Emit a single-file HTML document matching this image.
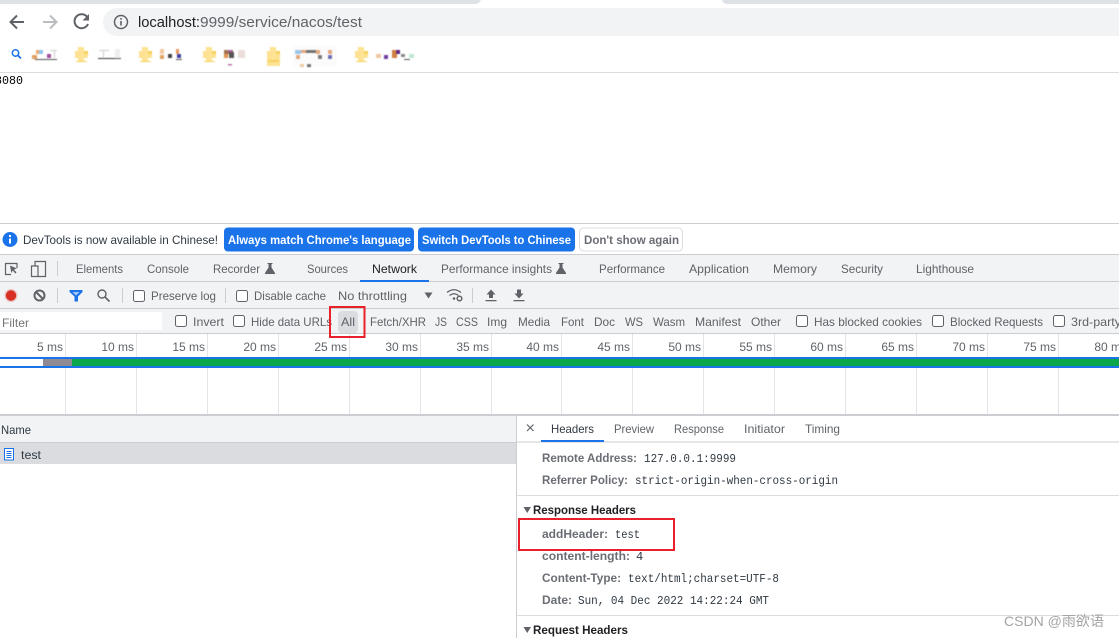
<!DOCTYPE html>
<html><head><meta charset="utf-8"><style>
html,body{margin:0;padding:0;background:#fff;width:1119px;height:638px;overflow:hidden}
svg{display:block;position:absolute;left:0;top:0}
text{font-family:"Liberation Sans","Noto Sans CJK SC",sans-serif;font-size:12px;fill:#5f6368;white-space:pre}
.d{fill:#303942}
.m{font-family:"Liberation Mono",monospace;fill:#303942;font-size:12px}
.b{font-weight:bold;fill:#6a6e74}
.h{font-weight:bold;fill:#202124}
.w{font-weight:bold;fill:#fff}
</style></head><body>
<svg width="1119" height="638" viewBox="0 0 1119 638" xmlns="http://www.w3.org/2000/svg">
<defs><filter id="bl" x="-5%" y="-20%" width="110%" height="140%"><feGaussianBlur stdDeviation="0.4"/></filter>
<path id="pz" d="M3 0h6v4h4v7H9v3h3v1H1v-1h2v-3H0V4h3z"/></defs>
<rect width="1119" height="638" fill="#fff"/>
<!-- tab strip -->
<path d="M0 0H481Q479 4 475 4H0z" fill="#dee1e6"/>
<path d="M722 0H1119V4H728Q723 4 722 0z" fill="#dee1e6"/>
<!-- nav -->
<g fill="none" stroke="#5f6368" stroke-width="2">
<path d="M24 22H11M17 15.500l-6.500 6.500 6.500 6.500"/>
<path d="M43 22H56M50 15.500l6.500 6.500-6.500 6.500" stroke="#babcbe"/>
<path d="M87.500 17.500A7 7 0 1 0 88 24"/></g>
<path d="M89 14v6.500h-6.500z" fill="#5f6368"/>
<rect x="103" y="8" width="1030" height="28" rx="14" fill="#f1f3f4"/>
<circle cx="121" cy="22" r="6.500" fill="none" stroke="#5f6368" stroke-width="1.500"/>
<rect x="120.200" y="21" width="1.600" height="4.500" fill="#5f6368"/><rect x="120.200" y="18" width="1.600" height="1.700" fill="#5f6368"/>
<text x="138" y="27" style="font-size:15px;fill:#202124" textLength="62" lengthAdjust="spacingAndGlyphs">localhost:</text>
<text x="200" y="27" style="font-size:15px" textLength="162" lengthAdjust="spacingAndGlyphs">9999/service/nacos/test</text>
<!-- bookmarks -->
<circle cx="15.500" cy="53" r="3.200" fill="none" stroke="#1a73e8" stroke-width="1.500"/><path d="M18 55.500l3 3" stroke="#1a73e8" stroke-width="1.700"/>
<g filter="url(#bl)">
<g fill="#fde293"><use href="#pz" x="75" y="47"/><use href="#pz" x="139" y="47"/><use href="#pz" x="203" y="47"/><use href="#pz" x="267" y="47"/><rect x="267" y="58" width="13" height="8"/><use href="#pz" x="355" y="47"/></g>
<g fill="#f5cf55"><rect x="84" y="51" width="4" height="3"/><rect x="148" y="51" width="4" height="3"/><rect x="212" y="51" width="4" height="3"/><rect x="276" y="51" width="4" height="3"/><rect x="364" y="51" width="4" height="3"/><rect x="268" y="60" width="11" height="2"/><rect x="76" y="61" width="11" height="1"/><rect x="140" y="61" width="11" height="1"/><rect x="204" y="61" width="11" height="1"/><rect x="356" y="61" width="11" height="1"/></g>
<rect x="32" y="55" width="5" height="4" fill="#e0a060"/><rect x="36" y="50" width="7" height="4" fill="#8fc4ee"/><rect x="36" y="50" width="3" height="4" fill="#eaa868"/><rect x="47" y="54" width="4" height="4" fill="#a050a0"/><rect x="35" y="59" width="22" height="1" fill="#555"/><rect x="50" y="50" width="7" height="1" fill="#ccc"/><rect x="54" y="50" width="1" height="8" fill="#ccc"/>
<rect x="98" y="58" width="23" height="1" fill="#333"/><rect x="99" y="50" width="10" height="1" fill="#ccc"/><rect x="103" y="50" width="1" height="8" fill="#ccc"/><rect x="115" y="49" width="5" height="9" fill="#eee"/>
<rect x="160" y="49" width="4" height="5" fill="#f0c8a0"/><rect x="160" y="55" width="4" height="4" fill="#e0a060"/><rect x="168" y="54" width="4" height="4" fill="#444"/><rect x="176" y="49" width="3" height="5" fill="#e89860"/><rect x="177" y="54" width="4" height="4" fill="#4040a0"/><rect x="176" y="59" width="6" height="1" fill="#555"/>
<rect x="224" y="50" width="9" height="4" fill="#a07050"/><rect x="224" y="54" width="4" height="4" fill="#e09050"/><rect x="229" y="52" width="5" height="6" fill="#555"/><rect x="228" y="50" width="4" height="2" fill="#b060a0"/><rect x="238" y="50" width="7" height="8" fill="#eadfd8"/><rect x="228" y="64" width="4" height="1.500" fill="#c070a0"/>
<rect x="295" y="50" width="6" height="4" fill="#80b8e8"/><rect x="301" y="50" width="5" height="3" fill="#e09050"/><rect x="306" y="50" width="10" height="3" fill="#444"/><rect x="296" y="55" width="4" height="4" fill="#e09050"/><rect x="316" y="50" width="4" height="4" fill="#e09050"/><rect x="318" y="55" width="4" height="4" fill="#555"/><rect x="328" y="50" width="4" height="4" fill="#e09050"/><rect x="328" y="55" width="4" height="4" fill="#4040a0"/><rect x="300" y="64" width="4" height="3" fill="#f0c090"/><rect x="307" y="64" width="4" height="3" fill="#555"/><rect x="293" y="46" width="44" height="20" fill="#eee" opacity=".25"/>
<rect x="376" y="54" width="5" height="4" fill="#f0c8a0"/><rect x="384" y="55" width="4" height="4" fill="#7040a0"/><rect x="392" y="50" width="5" height="8" fill="#d08040"/><rect x="396" y="50" width="4" height="4" fill="#602080"/><rect x="401" y="54" width="4" height="3" fill="#888"/><rect x="404" y="59" width="6" height="1" fill="#555"/><rect x="409" y="54" width="5" height="4" fill="#bfe8d4"/>
</g>
<rect x="0" y="72" width="1119" height="1" fill="#dadce0"/>
<text class="m" x="-5" y="84" style="fill:#000;font-size:12px" textLength="28" lengthAdjust="spacingAndGlyphs">8080</text>
<!-- devtools -->
<rect y="223" width="1119" height="1" fill="#cbcdd1"/>
<circle cx="10" cy="239.500" r="7.500" fill="#1a73e8"/><rect x="9" y="238.500" width="2" height="5" fill="#fff"/><rect x="9" y="235" width="2" height="2" fill="#fff"/>
<text class="d" x="23" y="244" textLength="195" lengthAdjust="spacingAndGlyphs">DevTools is now available in Chinese!</text>
<rect x="224" y="227.500" width="190" height="24" rx="4" fill="#1a73e8"/>
<text class="w" x="228" y="244" textLength="183" lengthAdjust="spacingAndGlyphs">Always match Chrome's language</text>
<rect x="418" y="227.500" width="157" height="24" rx="4" fill="#1a73e8"/>
<text class="w" x="422" y="244" textLength="149" lengthAdjust="spacingAndGlyphs">Switch DevTools to Chinese</text>
<rect x="579.500" y="228" width="103" height="23" rx="4" fill="#fff" stroke="#dadce0"/>
<text x="584" y="244" textLength="95" lengthAdjust="spacingAndGlyphs" style="font-weight:bold;fill:#6a6e74">Don't show again</text>
<rect y="254" width="1119" height="1" fill="#cbcdd1"/>
<rect y="255" width="1119" height="78" fill="#f1f3f4"/>
<rect y="281" width="1119" height="1" fill="#cbcdd1"/>
<rect y="308" width="1119" height="1" fill="#cbcdd1"/>
<rect y="333" width="1119" height="1" fill="#cbcdd1"/>
<!-- tabs row -->
<g fill="none" stroke="#5f6368" stroke-width="1.200"><path d="M11 274.500H5.500V263.500H17V268"/><path d="M35 266V261.500H45.500V276.500H31.500V266H38V276.500"/></g>
<path d="M10 265.500l7 3-3 1 2.500 3-1.200 1-2.500-3-1.500 2.500z" fill="#5f6368"/>
<rect x="57" y="261" width="1" height="15" fill="#cbcdd1"/>
<text x="76" y="273" textLength="47" lengthAdjust="spacingAndGlyphs">Elements</text>
<text x="147" y="273" textLength="42" lengthAdjust="spacingAndGlyphs">Console</text>
<text x="213" y="273" textLength="47" lengthAdjust="spacingAndGlyphs">Recorder</text>
<path d="M267.500 263h5v1h-1v3.500l3.500 5.500v1h-10v-1l3.500-5.500V264h-1z" fill="#5f6368"/>
<text x="307" y="273" textLength="41" lengthAdjust="spacingAndGlyphs">Sources</text>
<text x="372" y="273" textLength="45" lengthAdjust="spacingAndGlyphs" style="fill:#202124">Network</text>
<rect x="360" y="280" width="69" height="2" fill="#1a73e8"/>
<text x="441" y="273" textLength="111" lengthAdjust="spacingAndGlyphs">Performance insights</text>
<path d="M558.500 263h5v1h-1v3.500l3.500 5.500v1h-10v-1l3.500-5.500V264h-1z" fill="#5f6368"/>
<text x="599" y="273" textLength="66" lengthAdjust="spacingAndGlyphs">Performance</text>
<text x="689" y="273" textLength="60" lengthAdjust="spacingAndGlyphs">Application</text>
<text x="773" y="273" textLength="44" lengthAdjust="spacingAndGlyphs">Memory</text>
<text x="841" y="273" textLength="42" lengthAdjust="spacingAndGlyphs">Security</text>
<text x="916" y="273" textLength="58" lengthAdjust="spacingAndGlyphs">Lighthouse</text>
<!-- toolbar -->
<circle cx="11" cy="295.500" r="6.500" fill="#d93025" opacity=".25"/><circle cx="11" cy="295.500" r="5.200" fill="#d93025"/>
<circle cx="39.500" cy="295.500" r="5" fill="none" stroke="#5f6368" stroke-width="2"/><path d="M36 292l7 7" stroke="#5f6368" stroke-width="2"/>
<rect x="57" y="288" width="1" height="15" fill="#cbcdd1"/>
<path d="M69.500 290H82.500V292L78 296.500V301.500L74.500 301.500V296.500L69.500 292z" fill="#1a73e8"/><path d="M72.500 292H79.500L76 295.500z" fill="#a8c8f4"/>
<circle cx="102" cy="294" r="4" fill="none" stroke="#5f6368" stroke-width="1.400"/><path d="M105 297l4.500 4.500" stroke="#5f6368" stroke-width="1.600"/>
<rect x="122" y="288" width="1" height="15" fill="#cbcdd1"/>
<rect x="133.500" y="290.500" width="11" height="11" rx="2" fill="#fff" stroke="#5f6368"/>
<text x="151" y="300" textLength="65" lengthAdjust="spacingAndGlyphs">Preserve log</text>
<rect x="225" y="288" width="1" height="15" fill="#cbcdd1"/>
<rect x="236.500" y="290.500" width="11" height="11" rx="2" fill="#fff" stroke="#5f6368"/>
<text x="254" y="300" textLength="72" lengthAdjust="spacingAndGlyphs">Disable cache</text>
<text x="338" y="300" textLength="69" lengthAdjust="spacingAndGlyphs">No throttling</text>
<path d="M424.500 292.500h8l-4 6z" fill="#5f6368"/>
<g fill="none" stroke="#5f6368" stroke-width="1.300"><path d="M447 292.500q7-5.500 14 0"/><path d="M449.500 295.500q4.500-3.500 9 0"/></g>
<circle cx="454" cy="298.500" r="1.300" fill="#5f6368"/><circle cx="459.500" cy="298.500" r="2.300" fill="none" stroke="#5f6368" stroke-width="1.500"/>
<rect x="472" y="288" width="1" height="15" fill="#cbcdd1"/>
<path d="M491 289.500l4.500 5h-2.500v3.500h-4v-3.500h-2.500zM485.500 300h11v1.300h-11z" fill="#5f6368"/>
<path d="M517 289.500h4v4h2.500l-4.500 5-4.500-5h2.500zM513.500 300h11v1.300h-11z" fill="#5f6368"/>
<!-- filter row -->
<rect x="0" y="312" width="162" height="18" fill="#fff"/>
<text x="2" y="327" textLength="27" lengthAdjust="spacingAndGlyphs" style="fill:#757575">Filter</text>
<rect x="175.500" y="315.500" width="11" height="11" rx="2" fill="#fff" stroke="#5f6368"/>
<text x="193" y="326" textLength="31" lengthAdjust="spacingAndGlyphs">Invert</text>
<rect x="233.500" y="315.500" width="11" height="11" rx="2" fill="#fff" stroke="#5f6368"/>
<text x="251" y="326" textLength="81" lengthAdjust="spacingAndGlyphs">Hide data URLs</text>
<rect x="338" y="311" width="20" height="22" rx="4" fill="#dadce0"/>
<text x="341" y="326" textLength="14" lengthAdjust="spacingAndGlyphs">All</text>
<text x="370" y="326" textLength="56" lengthAdjust="spacingAndGlyphs">Fetch/XHR</text>
<text x="435" y="326" textLength="12" lengthAdjust="spacingAndGlyphs">JS</text>
<text x="456" y="326" textLength="22" lengthAdjust="spacingAndGlyphs">CSS</text>
<text x="487" y="326" textLength="20" lengthAdjust="spacingAndGlyphs">Img</text>
<text x="518" y="326" textLength="32" lengthAdjust="spacingAndGlyphs">Media</text>
<text x="561" y="326" textLength="23" lengthAdjust="spacingAndGlyphs">Font</text>
<text x="594" y="326" textLength="21" lengthAdjust="spacingAndGlyphs">Doc</text>
<text x="625" y="326" textLength="18" lengthAdjust="spacingAndGlyphs">WS</text>
<text x="653" y="326" textLength="32" lengthAdjust="spacingAndGlyphs">Wasm</text>
<text x="695" y="326" textLength="46" lengthAdjust="spacingAndGlyphs">Manifest</text>
<text x="751" y="326" textLength="30" lengthAdjust="spacingAndGlyphs">Other</text>
<rect x="796.500" y="315.500" width="11" height="11" rx="2" fill="#fff" stroke="#5f6368"/>
<text x="814" y="326" textLength="108" lengthAdjust="spacingAndGlyphs">Has blocked cookies</text>
<rect x="932.500" y="315.500" width="11" height="11" rx="2" fill="#fff" stroke="#5f6368"/>
<text x="950" y="326" textLength="93" lengthAdjust="spacingAndGlyphs">Blocked Requests</text>
<rect x="1053.500" y="315.500" width="11" height="11" rx="2" fill="#fff" stroke="#5f6368"/>
<text x="1071" y="326" textLength="50" lengthAdjust="spacingAndGlyphs">3rd-party</text>
<!-- timeline grid -->
<g fill="#e3e4e6">
<rect x="65" y="334" width="1" height="80"/><rect x="136" y="334" width="1" height="80"/><rect x="207" y="334" width="1" height="80"/><rect x="278" y="334" width="1" height="80"/><rect x="349" y="334" width="1" height="80"/><rect x="420" y="334" width="1" height="80"/><rect x="491" y="334" width="1" height="80"/><rect x="561" y="334" width="1" height="80"/><rect x="632" y="334" width="1" height="80"/><rect x="703" y="334" width="1" height="80"/><rect x="774" y="334" width="1" height="80"/><rect x="845" y="334" width="1" height="80"/><rect x="916" y="334" width="1" height="80"/><rect x="987" y="334" width="1" height="80"/><rect x="1058" y="334" width="1" height="80"/></g>
<g text-anchor="end">
<text x="63" y="351">5 ms</text><text x="134" y="351">10 ms</text><text x="205" y="351">15 ms</text><text x="276" y="351">20 ms</text><text x="347" y="351">25 ms</text><text x="418" y="351">30 ms</text><text x="489" y="351">35 ms</text><text x="559" y="351">40 ms</text><text x="630" y="351">45 ms</text><text x="701" y="351">50 ms</text><text x="772" y="351">55 ms</text><text x="843" y="351">60 ms</text><text x="914" y="351">65 ms</text><text x="985" y="351">70 ms</text><text x="1056" y="351">75 ms</text><text x="1127" y="351">80 ms</text></g>
<rect y="357" width="1119" height="2" fill="#1a73e8"/>
<rect y="366" width="1119" height="2" fill="#1a73e8"/>
<rect y="359" width="1119" height="7" fill="#0aa84a"/>
<rect y="359" width="43" height="7" fill="#fff"/>
<rect x="43" y="359" width="29" height="7" fill="#8f8a94"/>
<!-- red rect 1 -->
<rect x="330" y="307" width="34.500" height="30" fill="none" stroke="#e8202a" stroke-width="2"/>
<!-- lower pane -->
<rect y="414" width="1119" height="2" fill="#cbcdd1"/>
<rect y="416" width="516" height="26" fill="#f1f3f4"/>
<rect y="442" width="516" height="1" fill="#cbcdd1"/>
<rect y="443" width="516" height="21" fill="#dadce0"/>
<text x="1" y="434" textLength="30" lengthAdjust="spacingAndGlyphs" style="fill:#303942">Name</text>
<rect x="4.500" y="448.500" width="9" height="11.500" fill="#fff" stroke="#1a73e8"/>
<path d="M6.500 451.500h5M6.500 453.500h5M6.500 455.500h5M6.500 457.500h5" stroke="#1a73e8" stroke-width=".9"/>
<text x="21" y="459" textLength="20" lengthAdjust="spacingAndGlyphs" style="fill:#303942">test</text>
<rect x="516" y="416" width="1" height="222" fill="#cbcdd1"/>
<rect x="517" y="441.500" width="602" height="1" fill="#cbcdd1"/>
<path d="M527 424.500l6.500 6.500M533.500 424.500l-6.500 6.500" stroke="#5f6368" stroke-width="1.200"/>
<text x="551" y="433" textLength="43" lengthAdjust="spacingAndGlyphs" style="fill:#303942">Headers</text>
<rect x="541" y="440" width="63" height="2" fill="#1a73e8"/>
<text x="614" y="433" textLength="40" lengthAdjust="spacingAndGlyphs">Preview</text>
<text x="674" y="433" textLength="50" lengthAdjust="spacingAndGlyphs">Response</text>
<text x="744" y="433" textLength="41" lengthAdjust="spacingAndGlyphs">Initiator</text>
<text x="805" y="433" textLength="35" lengthAdjust="spacingAndGlyphs">Timing</text>
<text class="b" x="542" y="462" textLength="95" lengthAdjust="spacingAndGlyphs">Remote Address:</text>
<text class="m" x="644" y="462" textLength="92" lengthAdjust="spacingAndGlyphs">127.0.0.1:9999</text>
<text class="b" x="542" y="484" textLength="86" lengthAdjust="spacingAndGlyphs">Referrer Policy:</text>
<text class="m" x="635" y="484" textLength="203" lengthAdjust="spacingAndGlyphs">strict-origin-when-cross-origin</text>
<rect x="517" y="495" width="602" height="1" fill="#dadce0"/>
<path d="M523.500 507h7.500l-3.750 6z" fill="#5f6368"/>
<text class="h" x="533" y="514" textLength="103" lengthAdjust="spacingAndGlyphs">Response Headers</text>
<text class="b" x="542" y="538" textLength="66" lengthAdjust="spacingAndGlyphs">addHeader:</text>
<text class="m" x="615" y="538" textLength="25" lengthAdjust="spacingAndGlyphs">test</text>
<text class="b" x="542" y="560" textLength="88" lengthAdjust="spacingAndGlyphs">content-length:</text>
<text class="m" x="636" y="560">4</text>
<text class="b" x="542" y="582" textLength="79" lengthAdjust="spacingAndGlyphs">Content-Type:</text>
<text class="m" x="628" y="582" textLength="151" lengthAdjust="spacingAndGlyphs">text/html;charset=UTF-8</text>
<text class="b" x="542" y="604" textLength="30" lengthAdjust="spacingAndGlyphs">Date:</text>
<text class="m" x="578" y="604" textLength="191" lengthAdjust="spacingAndGlyphs">Sun, 04 Dec 2022 14:22:24 GMT</text>
<rect x="517" y="615" width="602" height="1" fill="#dadce0"/>
<path d="M523.500 627h7.500l-3.750 6z" fill="#5f6368"/>
<text class="h" x="533" y="634" textLength="95" lengthAdjust="spacingAndGlyphs">Request Headers</text>
<!-- red rect 2 -->
<rect x="519" y="519" width="155" height="31" fill="none" stroke="#e8202a" stroke-width="2"/>
<!-- watermark -->
<text x="1004" y="626" textLength="100" lengthAdjust="spacingAndGlyphs" style="font-size:14px;fill:#a3a3a3">CSDN @雨欲语</text>
</svg>
</body></html>
